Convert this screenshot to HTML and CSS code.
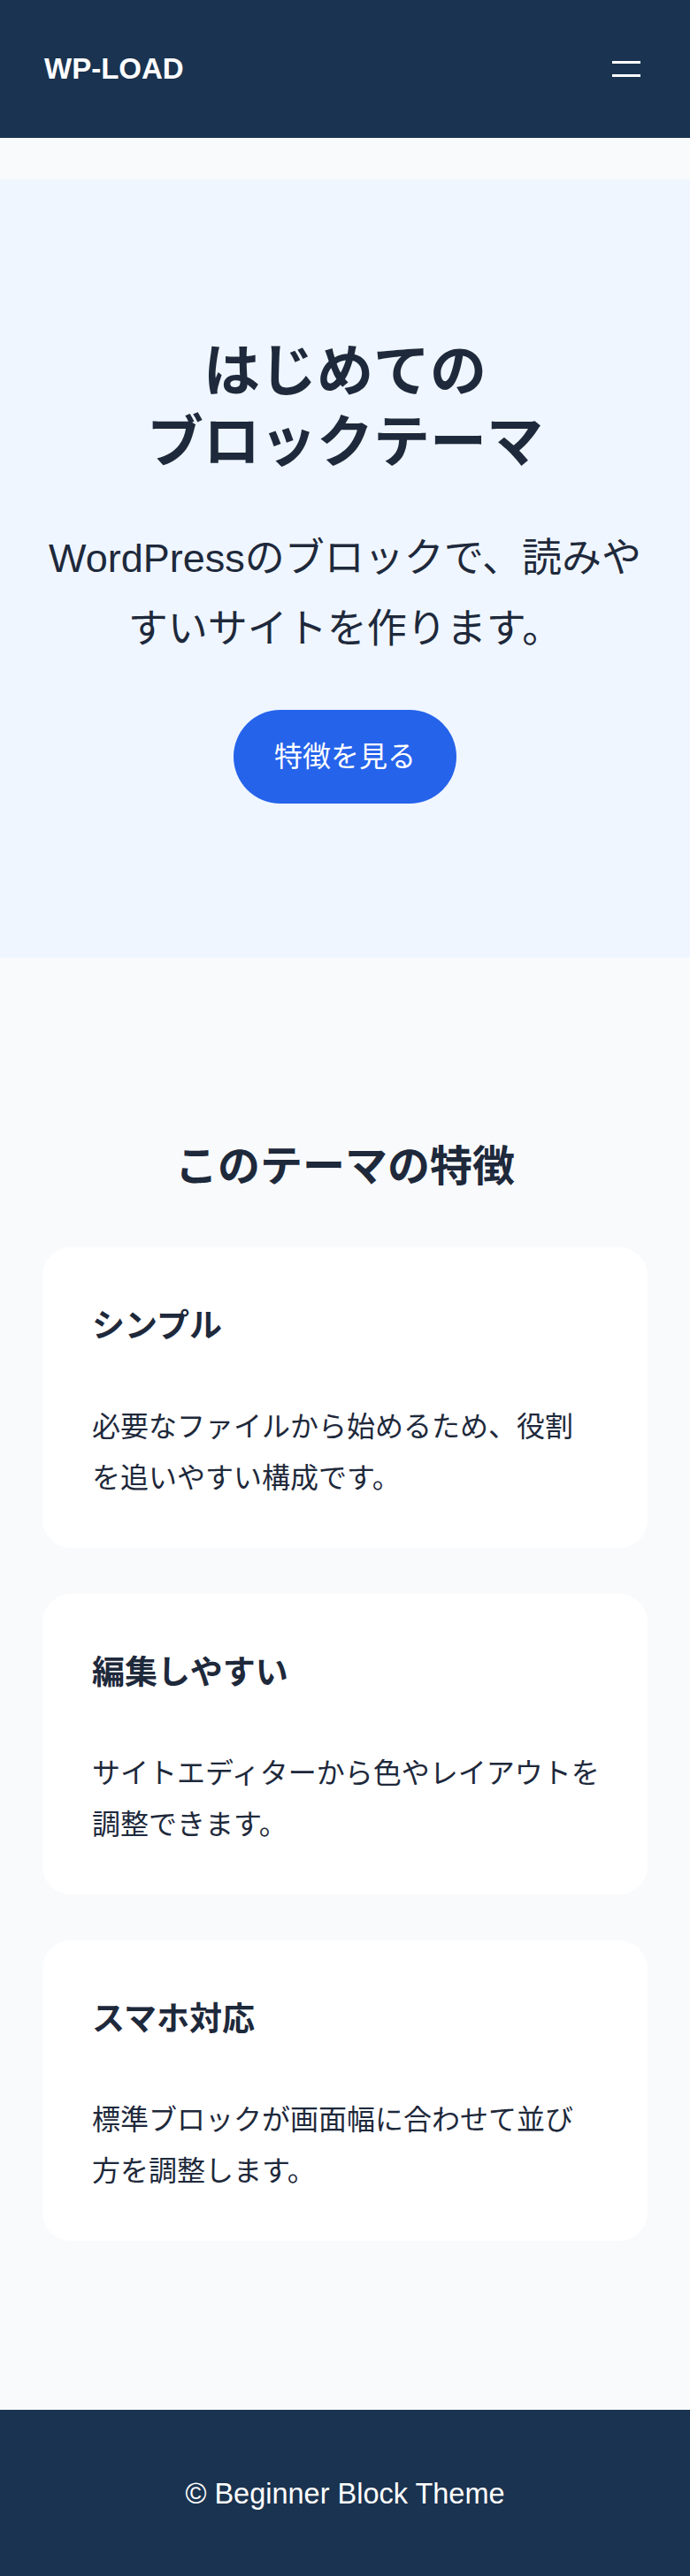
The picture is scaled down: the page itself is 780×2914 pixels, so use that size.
FILE: index.html
```html
<!DOCTYPE html>
<html lang="ja">
<head>
<meta charset="utf-8">
<meta name="viewport" content="width=device-width, initial-scale=1">
<title>WP-LOAD</title>
<link rel="stylesheet" href="styles.css">
</head>
<body>
<header class="site-header">
  <a class="site-title" href="#">WP-LOAD</a>
  <button class="menu-toggle" type="button" aria-label="メニュー">
    <span class="menu-line"></span>
    <span class="menu-line"></span>
  </button>
</header>
<main class="site-main">
  <section class="hero">
    <h1 class="hero-title">はじめての<br>ブロックテーマ</h1>
    <p class="hero-lead">WordPressのブロックで、読みやすいサイトを作ります。</p>
    <a class="hero-button" href="#features">特徴を見る</a>
  </section>
  <section class="features" id="features">
    <h2 class="features-title">このテーマの特徴</h2>
    <div class="feature-list">
      <article class="feature-card">
        <h3 class="feature-title">シンプル</h3>
        <p class="feature-text">必要なファイルから始めるため、役割<br>を追いやすい構成です。</p>
      </article>
      <article class="feature-card">
        <h3 class="feature-title">編集しやすい</h3>
        <p class="feature-text">サイトエディターから色やレイアウトを<br>調整できます。</p>
      </article>
      <article class="feature-card">
        <h3 class="feature-title">スマホ対応</h3>
        <p class="feature-text">標準ブロックが画面幅に合わせて並び<br>方を調整します。</p>
      </article>
    </div>
  </section>
</main>
<footer class="site-footer">
  <p class="copyright">© Beginner Block Theme</p>
</footer>
</body>
</html>
```

FILE: styles.css
```css
* {
  box-sizing: border-box;
}

html,
body {
  margin: 0;
  padding: 0;
}

body {
  background: #f8fafc;
  color: #1e293b;
  font-family: "Liberation Sans", "Noto Sans CJK JP", sans-serif;
}

/* Header */
.site-header {
  height: 156px;
  background: #1a3350;
  display: flex;
  align-items: center;
  justify-content: space-between;
  padding: 0 56px 0 50px;
}

.site-title {
  color: #ffffff;
  font-size: 33px;
  font-weight: 700;
  text-decoration: none;
  line-height: 1.2;
}

.menu-toggle {
  width: 32px;
  height: 18px;
  padding: 0;
  border: 0;
  background: transparent;
  display: flex;
  flex-direction: column;
  justify-content: space-between;
  cursor: pointer;
}

.menu-line {
  display: block;
  width: 32px;
  height: 3px;
  background: #ffffff;
}

/* Main */
.site-main {
  padding-top: 47px;
}

.hero {
  background: #eff6ff;
  padding: 177px 48px 174px;
  text-align: center;
}

.hero-title {
  margin: 0;
  font-size: 64px;
  line-height: 80px;
  font-weight: 700;
  color: #1e293b;
}

.hero-lead {
  margin: 52px 0 0;
  font-size: 45px;
  line-height: 80px;
  font-weight: 400;
  color: #1e293b;
}

.hero-button {
  display: inline-block;
  margin-top: 51px;
  padding: 30px 46px;
  line-height: 46px;
  font-size: 32px;
  color: #ffffff;
  background: #2563eb;
  border-radius: 999px;
  text-decoration: none;
}

/* Features */
.features {
  padding: 203px 48px 191px;
}

.features-title {
  margin: 0 0 57px;
  text-align: center;
  font-size: 48px;
  line-height: 68px;
  font-weight: 700;
  color: #1e293b;
}

.feature-list {
  display: flex;
  flex-direction: column;
  gap: 52px;
}

.feature-card {
  background: #ffffff;
  border-radius: 32px;
  padding: 61px 48px 50px 56px;
}

.feature-title {
  margin: 0 0 55px;
  font-size: 37px;
  line-height: 58px;
  font-weight: 700;
  color: #1e293b;
}

.feature-text {
  margin: 0;
  font-size: 32px;
  line-height: 58px;
  color: #1e293b;
}

/* Footer */
.site-footer {
  background: #1a3350;
  padding: 66px 0 64px;
  text-align: center;
}

.copyright {
  margin: 0;
  color: #ffffff;
  font-size: 32.5px;
  line-height: 58px;
}
```
